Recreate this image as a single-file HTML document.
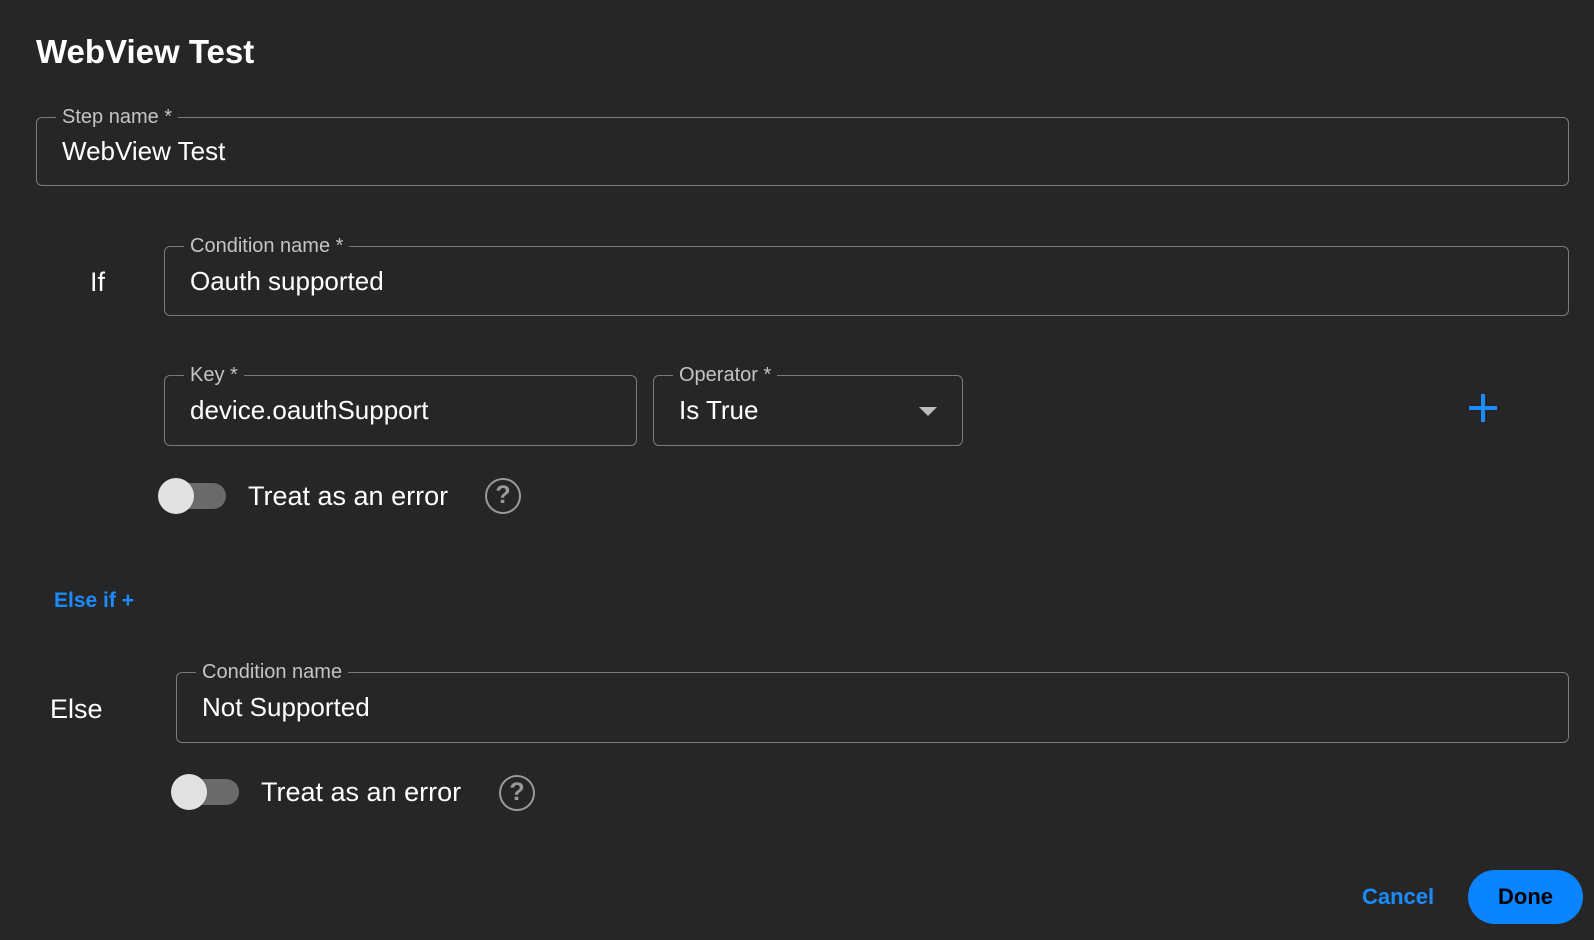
<!DOCTYPE html>
<html><head><style>
*{box-sizing:border-box;margin:0;padding:0}
body{width:1594px;height:940px;background:#262626;font-family:"Liberation Sans",sans-serif;color:#fff;position:relative;overflow:hidden}
.a{position:absolute}
.f{position:absolute;border:1px solid #7a7a7a;border-radius:6px}
.f .l{position:absolute;top:-13px;left:19px;padding:0 6px;background:#262626;color:#c4c4c4;font-size:20px;line-height:24px}
.f .v{position:absolute;left:25px;top:0;bottom:0;display:flex;align-items:center;font-size:26px;color:#fff}
.tr{position:absolute;width:66px;height:26px;border-radius:13px;background:#6a6a6a}
.kn{position:absolute;width:36px;height:36px;border-radius:50%;background:#e2e2e2;left:-2px;top:-5px}
.tx{position:absolute;font-size:27px;color:#fff;line-height:30px}
.h{position:absolute;width:36px;height:36px;border:2.5px solid #9a9a9a;border-radius:50%;color:#9a9a9a;font-size:25px;font-weight:bold;text-align:center;line-height:31px}
</style></head><body>
<div class="a" style="left:36px;top:32px;font-size:33px;font-weight:bold;line-height:40px">WebView Test</div>
<div class="f" style="left:36px;top:117px;width:1533px;height:69px"><span class="l">Step name *</span><span class="v">WebView Test</span></div>
<div class="a" style="left:90px;top:267px;font-size:27px">If</div>
<div class="f" style="left:164px;top:246px;width:1405px;height:70px"><span class="l">Condition name *</span><span class="v">Oauth supported</span></div>
<div class="f" style="left:164px;top:375px;width:473px;height:71px"><span class="l">Key *</span><span class="v">device.oauthSupport</span></div>
<div class="f" style="left:653px;top:375px;width:310px;height:71px"><span class="l">Operator *</span><span class="v">Is True</span>
<div class="a" style="right:25px;top:31px;width:0;height:0;border-left:9px solid transparent;border-right:9px solid transparent;border-top:9px solid #bdbdbd"></div></div>
<div class="a" style="left:1469px;top:406px;width:28px;height:4px;background:#1a8cff"></div>
<div class="a" style="left:1481px;top:394px;width:4px;height:28px;background:#1a8cff"></div>
<div class="tr" style="left:160px;top:483px"><div class="kn"></div></div>
<div class="tx" style="left:248px;top:481px">Treat as an error</div>
<div class="h" style="left:485px;top:478px">?</div>
<div class="a" style="left:54px;top:589px;font-size:21px;font-weight:bold;color:#1a8cff">Else if +</div>
<div class="a" style="left:50px;top:694px;font-size:27px">Else</div>
<div class="f" style="left:176px;top:672px;width:1393px;height:71px"><span class="l">Condition name</span><span class="v">Not Supported</span></div>
<div class="tr" style="left:173px;top:779px"><div class="kn"></div></div>
<div class="tx" style="left:261px;top:777px">Treat as an error</div>
<div class="h" style="left:499px;top:775px">?</div>
<div class="a" style="left:1362px;top:884px;font-size:22px;font-weight:bold;color:#1a8cff">Cancel</div>
<div class="a" style="left:1468px;top:870px;width:115px;height:54px;border-radius:27px;background:#0a84ff;color:#000;font-size:22px;font-weight:bold;text-align:center;line-height:54px">Done</div>
</body></html>
